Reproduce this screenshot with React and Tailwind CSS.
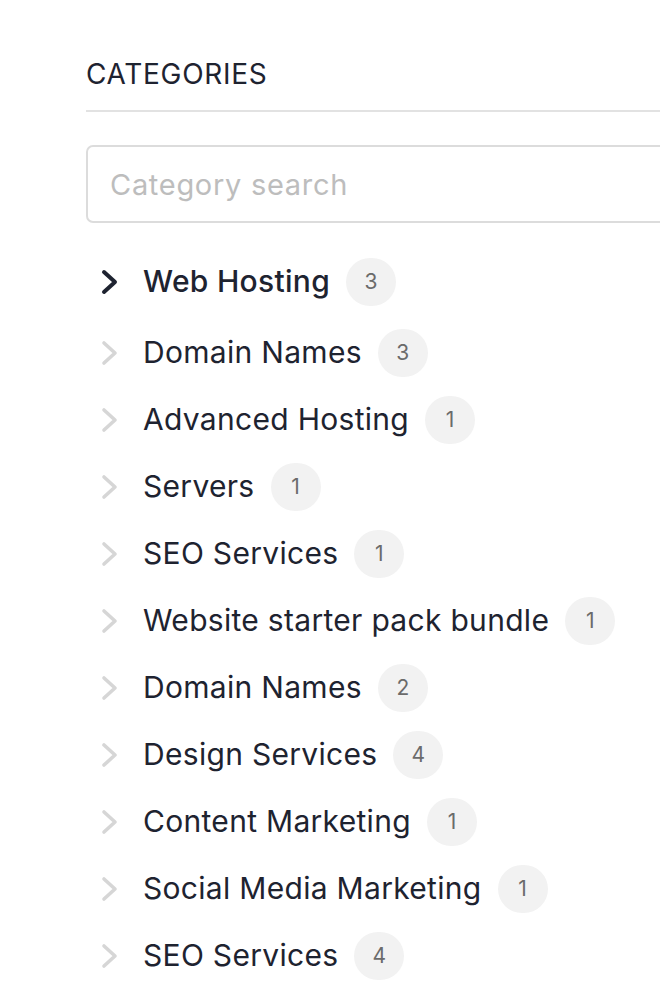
import React from "react";

const categories = [
  { name: "Web Hosting", count: 3, active: true },
  { name: "Domain Names", count: 3 },
  { name: "Advanced Hosting", count: 1 },
  { name: "Servers", count: 1 },
  { name: "SEO Services", count: 1 },
  { name: "Website starter pack bundle", count: 1 },
  { name: "Domain Names", count: 2 },
  { name: "Design Services", count: 4 },
  { name: "Content Marketing", count: 1 },
  { name: "Social Media Marketing", count: 1 },
  { name: "SEO Services", count: 4 },
];

function Chevron({ active }) {
  return (
    <svg width="20" height="28" viewBox="0 0 20 28" fill="none" className="shrink-0">
      <path
        d="M5 4 L16 14 L5 24"
        stroke={active ? "#1e2330" : "#d6d6d6"}
        strokeWidth={active ? 4 : 3.6}
        strokeLinecap="round"
        strokeLinejoin="round"
      />
    </svg>
  );
}

export default function App() {
  return (
    <div className="w-[660px] h-[990px] overflow-hidden bg-white font-['Inter',sans-serif] text-[#1e2330]">
      <div className="ml-[86px] w-[600px] pt-[56px]">
        <h2 className="text-[28px] leading-[36px] tracking-[0.7px]">CATEGORIES</h2>
        <div className="mt-[18px] h-[2px] bg-[#e2e2e2]" />
        <input
          type="text"
          placeholder="Category search"
          className="mt-[33px] w-full h-[78px] rounded-[7px] border-2 border-[#dcdcdc] px-[22px] text-[29px] tracking-[0.7px] placeholder:text-[#bdbdbd] outline-none"
        />
        <ul className="mt-[25px] flex flex-col">
          {categories.map((c, i) => (
            <li
              key={i}
              className={`flex items-center h-[67px] ${i === 0 ? "mb-[4px]" : ""}`}
            >
              <div className="w-[57px] pl-[13px] flex items-center">
                <Chevron active={c.active} />
              </div>
              <span className={`text-[30px] tracking-[0.3px] ${c.active ? "font-medium" : ""}`}>{c.name}</span>
              <span className="ml-[16px] w-[50px] h-[48px] rounded-full bg-[#f2f2f2] text-[#6b6b6b] text-[21px] flex items-center justify-center">
                {c.count}
              </span>
            </li>
          ))}
        </ul>
      </div>
    </div>
  );
}
